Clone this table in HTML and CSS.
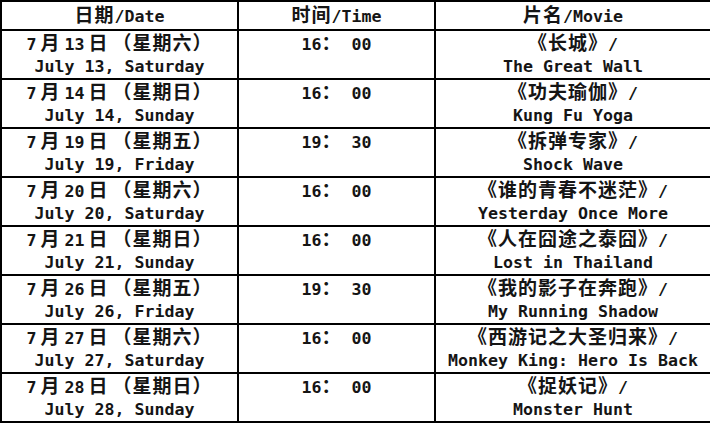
FILE: index.html
```html
<!DOCTYPE html>
<html>
<head>
<meta charset="utf-8">
<link rel="stylesheet" href="styles.css">
</head>
<body>
<table class="schedule">
  <colgroup>
    <col class="c-date">
    <col class="c-time">
    <col class="c-movie">
  </colgroup>
  <thead>
    <tr class="head">
      <th><span class="hline"><span class="zh">日期</span>/Date</span></th>
      <th><span class="hline"><span class="zh">时间</span>/Time</span></th>
      <th><span class="hline"><span class="zh">片名</span>/Movie</span></th>
    </tr>
  </thead>
  <tbody>
    <tr>
      <td><span class="line">7<span class="zh sp">月</span>13<span class="zh sp">日</span><span class="zh">（星期六）</span></span><span class="line">July 13, Saturday</span></td>
      <td><span class="line">16<span class="zh">：</span> 00</span><span class="line"></span></td>
      <td><span class="line"><span class="zh">《长城》</span>/</span><span class="line">The Great Wall</span></td>
    </tr>
    <tr>
      <td><span class="line">7<span class="zh sp">月</span>14<span class="zh sp">日</span><span class="zh">（星期日）</span></span><span class="line">July 14, Sunday</span></td>
      <td><span class="line">16<span class="zh">：</span> 00</span><span class="line"></span></td>
      <td><span class="line"><span class="zh">《功夫瑜伽》</span>/</span><span class="line">Kung Fu Yoga</span></td>
    </tr>
    <tr>
      <td><span class="line">7<span class="zh sp">月</span>19<span class="zh sp">日</span><span class="zh">（星期五）</span></span><span class="line">July 19, Friday</span></td>
      <td><span class="line">19<span class="zh">：</span> 30</span><span class="line"></span></td>
      <td><span class="line"><span class="zh">《拆弹专家》</span>/</span><span class="line">Shock Wave</span></td>
    </tr>
    <tr>
      <td><span class="line">7<span class="zh sp">月</span>20<span class="zh sp">日</span><span class="zh">（星期六）</span></span><span class="line">July 20, Saturday</span></td>
      <td><span class="line">16<span class="zh">：</span> 00</span><span class="line"></span></td>
      <td><span class="line"><span class="zh">《谁的青春不迷茫》</span>/</span><span class="line">Yesterday Once More</span></td>
    </tr>
    <tr>
      <td><span class="line">7<span class="zh sp">月</span>21<span class="zh sp">日</span><span class="zh">（星期日）</span></span><span class="line">July 21, Sunday</span></td>
      <td><span class="line">16<span class="zh">：</span> 00</span><span class="line"></span></td>
      <td><span class="line"><span class="zh">《人在囧途之泰囧》</span>/</span><span class="line">Lost in Thailand</span></td>
    </tr>
    <tr>
      <td><span class="line">7<span class="zh sp">月</span>26<span class="zh sp">日</span><span class="zh">（星期五）</span></span><span class="line">July 26, Friday</span></td>
      <td><span class="line">19<span class="zh">：</span> 30</span><span class="line"></span></td>
      <td><span class="line"><span class="zh">《我的影子在奔跑》</span>/</span><span class="line">My Running Shadow</span></td>
    </tr>
    <tr>
      <td><span class="line">7<span class="zh sp">月</span>27<span class="zh sp">日</span><span class="zh">（星期六）</span></span><span class="line">July 27, Saturday</span></td>
      <td><span class="line">16<span class="zh">：</span> 00</span><span class="line"></span></td>
      <td><span class="line"><span class="zh">《西游记之大圣归来》</span>/</span><span class="line">Monkey King: Hero Is Back</span></td>
    </tr>
    <tr>
      <td><span class="line">7<span class="zh sp">月</span>28<span class="zh sp">日</span><span class="zh">（星期日）</span></span><span class="line">July 28, Sunday</span></td>
      <td><span class="line">16<span class="zh">：</span> 00</span><span class="line"></span></td>
      <td><span class="line"><span class="zh">《捉妖记》</span>/</span><span class="line">Monster Hunt</span></td>
    </tr>
  </tbody>
</table>
</body>
</html>
```

FILE: styles.css
```css
html, body {
  margin: 0;
  padding: 0;
  background: #ffffff;
}

.schedule {
  width: 710px;
  border-collapse: collapse;
  table-layout: fixed;
  font-family: "DejaVu Sans Mono", "Noto Sans CJK SC", monospace;
  font-weight: bold;
  font-size: 16.6px;
  color: #151515;
}

.c-date { width: 237px; }
.c-time { width: 197px; }
.c-movie { width: 276px; }

.schedule th,
.schedule td {
  border: 2px solid #000;
  padding: 0;
  text-align: center;
  vertical-align: top;
  white-space: nowrap;
  font-weight: bold;
}

.head {
  height: 29px;
}

.schedule tbody tr {
  height: 49px;
}

.hline {
  display: block;
  height: 27px;
  line-height: 24px;
}

.line {
  display: block;
  height: 23.5px;
  line-height: 22.5px;
}

.line + .line {
  line-height: 24.5px;
}

.zh {
  font-family: "Noto Sans CJK SC", sans-serif;
  font-size: 19px;
  letter-spacing: 1px;
  font-weight: bold;
}

.sp {
  padding: 0 4px;
}
```
